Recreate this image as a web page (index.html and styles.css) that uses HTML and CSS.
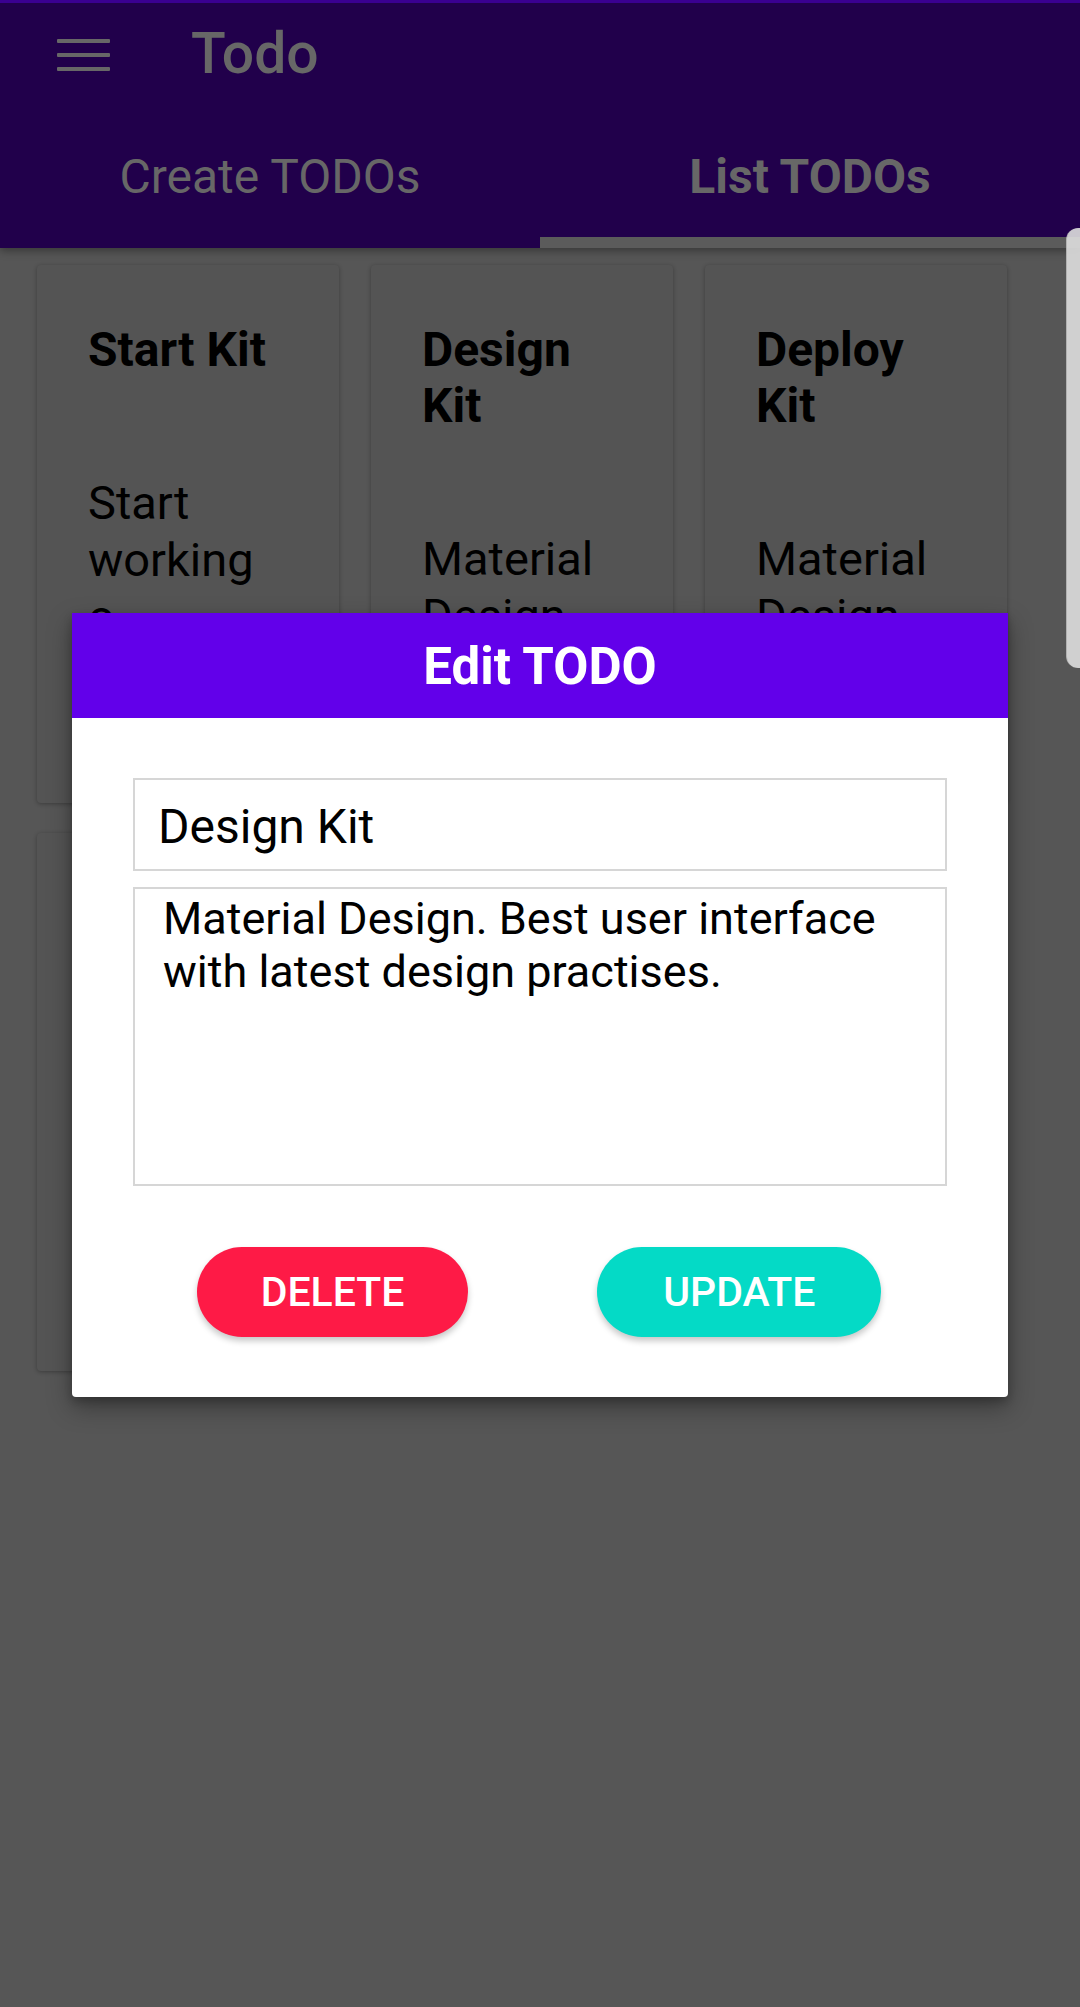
FILE: index.html
```html
<!DOCTYPE html>
<html>
<head>
<meta charset="utf-8">
<link rel="stylesheet" href="styles.css">
</head>
<body>
<div class="app">
  <header class="appbar">
    <div class="statusline"></div>
    <div class="toolbar">
      <div class="menu"><span></span><span></span><span></span></div>
      <div class="title">Todo</div>
    </div>
    <nav class="tabs">
      <div class="tab">Create TODOs</div>
      <div class="tab active">List TODOs</div>
    </nav>
  </header>
  <main class="grid">
    <div class="card">
      <div class="card-title">Start Kit</div>
      <div class="card-body">Start working o implementation with the starter kit.</div>
    </div>
    <div class="card">
      <div class="card-title">Design Kit</div>
      <div class="card-body">Material Design. Best user interface with latest design practises.</div>
    </div>
    <div class="card">
      <div class="card-title">Deploy Kit</div>
      <div class="card-body">Material Design. Best user interface with latest design practises.</div>
    </div>
    <div class="card">
      <div class="card-title">Test Kit</div>
      <div class="card-body">Material Design. Best user interface with latest design practises.</div>
    </div>
  </main>
</div>

<div class="edge-handle"></div>

<div class="dialog">
  <div class="dialog-head">Edit TODO</div>
  <div class="dialog-body">
    <div class="field">Design Kit</div>
    <div class="area">Material Design. Best user interface with latest design practises.</div>
    <div class="actions">
      <button class="btn btn-delete">Delete</button>
      <button class="btn btn-update">Update</button>
    </div>
  </div>
</div>
</body>
</html>
```

FILE: styles.css
```css
* { box-sizing: border-box; }
html, body { margin: 0; padding: 0; }
body {
  width: 1080px;
  height: 2007px;
  background: #565656;
  font-family: Roboto, "Noto Sans", "Liberation Sans", sans-serif;
  overflow: hidden;
  position: relative;
}

.appbar {
  background: #21004b;
  box-shadow: 0 3px 8px rgba(0,0,0,0.35);
  position: relative;
  z-index: 1;
}
.statusline { height: 3px; background: #3a0090; }
.toolbar {
  height: 104px;
  display: flex;
  align-items: center;
  padding-left: 57px;
}
.menu {
  width: 53px;
  height: 32px;
  display: flex;
  flex-direction: column;
  justify-content: space-between;
  margin-right: 81px;
}
.menu span { display: block; height: 4px; background: #676767; border-radius: 1px; }
.title {
  color: #676767;
  font-size: 57px;
  font-weight: 500;
  line-height: 1;
  margin-top: -4px;
}
.tabs { display: flex; height: 141px; }
.tab {
  flex: 1;
  display: flex;
  align-items: center;
  justify-content: center;
  color: #676767;
  font-size: 48px;
  padding-top: 8px;
  border-bottom: 11px solid transparent;
}
.tab.active { font-weight: 700; border-bottom-color: #5b5b5b; }

.grid {
  display: grid;
  grid-template-columns: repeat(3, 302px);
  column-gap: 32px;
  row-gap: 30px;
  padding: 17px 0 0 37px;
}
.card {
  height: 538px;
  background: #545454;
  border-radius: 4px;
  box-shadow: 0 1px 4px rgba(0,0,0,0.3);
  padding: 57px 56px 0 51px;
  overflow: hidden;
}
.card-title {
  font-weight: 700;
  font-size: 48px;
  line-height: 56px;
  color: #000;
}
.card-body {
  margin-top: 96px;
  font-size: 47px;
  line-height: 57px;
  color: #000;
}

.edge-handle {
  position: absolute;
  top: 228px;
  right: 0;
  width: 14px;
  height: 440px;
  background: rgba(222,222,222,0.9);
  border-radius: 12px 0 0 12px;
  border-left: 1px solid rgba(0,0,0,0.15);
  z-index: 3;
}

.dialog {
  position: absolute;
  top: 613px;
  left: 72px;
  width: 936px;
  height: 784px;
  background: #fff;
  border-radius: 0 0 4px 4px;
  box-shadow: 0 10px 24px rgba(0,0,0,0.35), 0 4px 8px rgba(0,0,0,0.2);
  z-index: 2;
}
.dialog-head {
  height: 105px;
  background: #6200ea;
  color: #fff;
  font-weight: 700;
  font-size: 51px;
  display: flex;
  align-items: center;
  justify-content: center;
  padding-top: 2px;
}
.dialog-body { padding: 60px 61px 0; }
.field {
  height: 93px;
  border: 2px solid #d6d6d6;
  font-size: 48px;
  color: #000;
  display: flex;
  align-items: center;
  padding: 4px 0 0 23px;
}
.area {
  margin-top: 16px;
  height: 299px;
  border: 2px solid #d6d6d6;
  font-size: 45px;
  line-height: 53px;
  color: #000;
  padding: 3px 20px 0 28px;
}
.actions {
  display: flex;
  justify-content: space-evenly;
  margin: 61px -61px 0;
}
.btn {
  height: 90px;
  border: none;
  border-radius: 45px;
  padding: 0 64px;
  font-family: Roboto, "Noto Sans", "Liberation Sans", sans-serif;
  font-size: 41px;
  font-weight: 500;
  text-transform: uppercase;
  color: #fff;
  box-shadow: 0 4px 6px rgba(0,0,0,0.22);
}
.btn-delete { background: #fe1a46; margin-left: -4px; }
.btn-update { background: #04dac6; padding: 0 66px; margin-right: -2px; }
```
